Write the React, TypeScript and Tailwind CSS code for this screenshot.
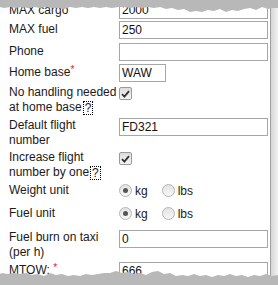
import React from 'react';

function Req() {
  return <span className="text-[#e02020] text-[10px] align-top leading-none">*</span>;
}

function Help() {
  return (
    <span className="inline-block border border-dotted border-black leading-[12px] px-[1px] ml-[1px] align-middle">?</span>
  );
}

function Box({ value, w = 'w-[149px]' }: { value: string; w?: string }) {
  return (
    <div className={`${w} h-[18px] border border-[#a6a6a6] bg-white px-[2px] leading-[16px] text-[12px] text-[#111]`}>
      {value}
    </div>
  );
}

function Check() {
  return (
    <span className="w-[13px] h-[13px] border border-[#9a9a9a] rounded-[2px] bg-gradient-to-b from-[#dcdcdc] to-[#f6f6f6] flex items-center justify-center">
      <svg width="9" height="8" viewBox="0 0 9 8">
        <path d="M1 4.2 L3.4 6.6 L8 1.2" fill="none" stroke="#333" strokeWidth="1.8" />
      </svg>
    </span>
  );
}

function Radio({ on }: { on?: boolean }) {
  return (
    <span className="w-[13px] h-[13px] rounded-full border border-[#b4b4b4] bg-gradient-to-b from-[#e2e2e2] to-[#f8f8f8] flex items-center justify-center">
      {on && <span className="w-[5px] h-[5px] rounded-full bg-[#555]" />}
    </span>
  );
}

function Label({ children }: { children: React.ReactNode }) {
  return <div className="w-[119px] shrink-0 pl-[9px] pr-[2px] leading-[15px] whitespace-nowrap">{children}</div>;
}

function Units() {
  return (
    <div className="flex items-center">
      <Radio on />
      <span className="ml-[3px] mr-[14px]">kg</span>
      <Radio />
      <span className="ml-[3px]">lbs</span>
    </div>
  );
}

export default function App() {
  return (
    <div className="relative w-[278px] h-[285px] overflow-hidden bg-[#f0f0f0] text-[12px] text-[#1a1a1a] font-['Liberation_Sans',Arial,sans-serif]">
      <div className="flex h-full">
        <div className="w-[271px] h-full bg-white border-r border-[#a0a0a0] flex flex-col">
          <div className="flex items-center h-[22px] -mt-[1px]">
            <Label>MAX cargo</Label>
            <Box value="2000" />
          </div>
          <div className="flex items-start h-[22px]">
            <Label><div className="pt-[1px]">MAX fuel</div></Label>
            <Box value="250" />
          </div>
          <div className="flex items-start h-[21px]">
            <Label><div className="pt-[1px]">Phone</div></Label>
            <Box value="" />
          </div>
          <div className="flex items-start h-[22px]">
            <Label><div className="pt-[1px]">Home base<Req /></div></Label>
            <Box value="WAW" w="w-[47px]" />
          </div>
          <div className="flex items-start h-[32px]">
            <Label><div className="-mt-[1px]">No handling needed<br />at home base<Help /></div></Label>
            <div className="mt-[1px]"><Check /></div>
          </div>
          <div className="flex items-start h-[33px]">
            <Label>Default flight<br />number</Label>
            <Box value="FD321" />
          </div>
          <div className="flex items-start h-[28px]">
            <Label><div className="-mt-[1px]">Increase flight<br />number by one<Help /></div></Label>
            <div className="mt-[1px]"><Check /></div>
          </div>
          <div className="flex items-center h-[23px]">
            <Label>Weight unit</Label>
            <Units />
          </div>
          <div className="flex items-center h-[23px]">
            <Label>Fuel unit</Label>
            <Units />
          </div>
          <div className="flex items-start h-[37px] pt-[5px]">
            <Label>Fuel burn on taxi<br />(per h)</Label>
            <Box value="0" />
          </div>
          <div className="flex items-start h-[22px]">
            <Label><div className="pt-[1px]">MTOW: <Req /></div></Label>
            <Box value="666" />
          </div>
        </div>
        <div className="w-[7px] h-full bg-gradient-to-r from-[#d6d6d6] to-[#f2f2f2]" />
      </div>

      <svg className="absolute top-0 left-0" width="278" height="16" viewBox="0 0 278 16">
        <polygon
          fill="#b8b8b8"
          points="0,0 278,0 278,8 272,8 268,9 262,7 256,10 250,8 244,9 238,11 232,10 226,12 220,9 214,11 208,10 202,12 196,11 190,12 184,9 178,10 172,8 166,9 160,7 154,8 148,7 142,8 136,7 130,8 124,7 118,7 112,8 106,7 100,8 94,7 88,8 82,7 76,8 70,7 64,9 58,8 52,8 46,7 40,8 34,7 28,8 22,7 16,8 10,7 4,8 0,7"
        />
      </svg>
      <svg className="absolute bottom-0 left-0" width="278" height="20" viewBox="0 0 278 20">
        <polygon
          fill="#b8b8b8"
          points="0,20 278,20 278,10 272,11 266,9 260,11 254,10 248,12 242,10 236,11 230,9 224,11 218,10 212,12 206,10 200,11 194,9 188,11 182,10 176,11 170,8 164,9 158,6 152,7 146,10 140,8 134,9 128,7 122,8 116,6 110,8 104,8 98,9 92,10 86,9 80,11 74,10 68,11 62,9 56,10 50,8 44,11 38,9 32,10 26,8 20,9 14,8 8,9 2,8 0,9"
        />
      </svg>
    </div>
  );
}
